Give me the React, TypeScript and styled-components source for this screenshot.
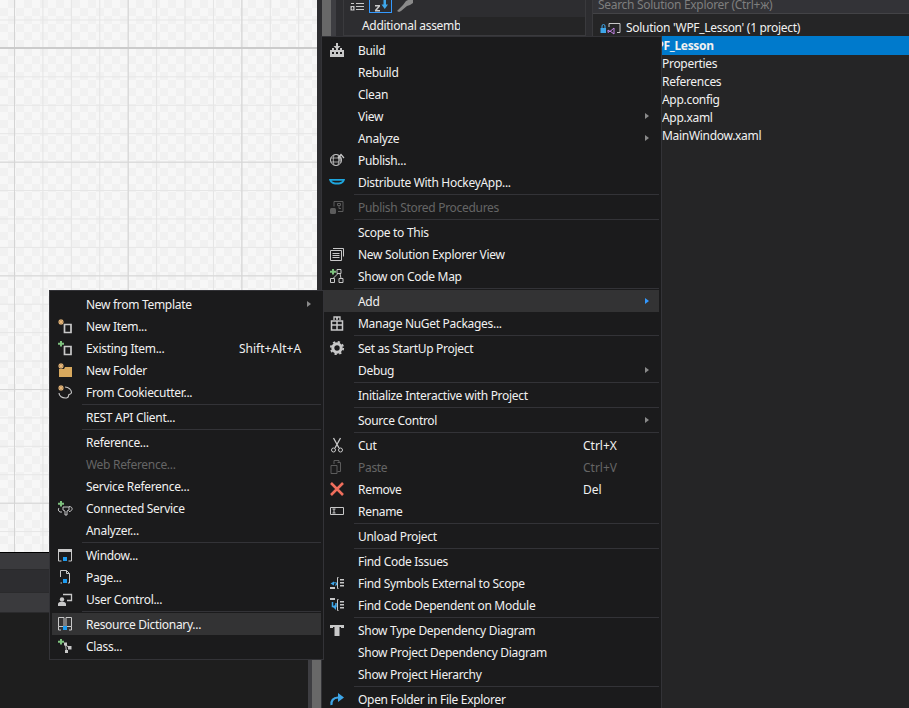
import React from "react";
import styled, { createGlobalStyle } from "styled-components";

const Global = createGlobalStyle`
  html, body { margin: 0; padding: 0; background: #1e1e1e; }
  body { font-family: "Noto Sans", "Liberation Sans", sans-serif; font-size: 12px; letter-spacing: -0.3px; overflow: hidden; }
`;

const Page = styled.div`
  position: relative;
  width: 909px;
  height: 708px;
  overflow: hidden;
  display: grid;
  grid-template-columns: 322px 270px 317px;
  background: #2d2d30;
`;

const LeftColumn = styled.div`
  display: flex;
  flex-direction: column;
  min-width: 0;
`;

const Designer = styled.div`
  height: 552px;
  flex: none;
  margin-right: 5px;
  border-bottom: 1px solid #000;
  background-color: #f7f7f7;
  background-image:
    linear-gradient(#cbcbcb, #cbcbcb),
    linear-gradient(#d6d6d6 0 1px, transparent 1px),
    linear-gradient(90deg, #d4d4d4 0 1px, transparent 1px),
    linear-gradient(#e6e6e6 0 1px, transparent 1px),
    linear-gradient(90deg, #e4e4e4 0 1px, transparent 1px),
    conic-gradient(#f1f1f1 25%, transparent 0 50%, #f1f1f1 0 75%, transparent 0);
  background-size: 100% 2px, 100% 113.7px, 113.7px 100%, 100% 28.43px, 28.43px 100%, 16px 16px;
  background-position: 0 47px, 0 48px, 14px 0, 0 19.500px, 14px 0, 0 0;
  background-repeat: no-repeat, repeat-y, repeat-x, repeat-y, repeat-x, repeat;
`;

const DesignerBar = styled.div<{ $h: number; $bg: string }>`
  height: ${(p) => p.$h}px;
  flex: none;
  background: ${(p) => p.$bg};
  border-bottom: 1px solid #2a2a2c;
`;

const EmptyPane = styled.div`
  flex: 1;
  display: flex;
  justify-content: flex-end;
  background: #1e1e1e;
`;

const ScrollTrack = styled.div`
  width: 14px;
  box-sizing: border-box;
  padding: 0 1px 0 4px;
  background: #3e3e42;
`;

const ScrollThumb = styled.div`
  height: 100%;
  background: #686868;
`;

const MiddlePane = styled.div`
  display: flex;
  padding-left: 21px;
  background: linear-gradient(90deg, #686868 0 9px, #3e3e42 9px 14px, #2d2d30 14px 21px);
`;

const PropsPanel = styled.div`
  width: 243px;
  box-sizing: border-box;
  flex: none;
  border-left: 1px solid #3a3a3d;
  border-right: 1px solid #3a3a3d;
  background: #2d2d30;
`;

const PropsToolbar = styled.div`
  height: 17px;
  display: flex;
  align-items: flex-start;
  gap: 1px;
  padding-left: 1px;
`;

const ToolButton = styled.span<{ $on?: boolean }>`
  width: 23px;
  height: 13px;
  box-sizing: border-box;
  display: flex;
  align-items: flex-end;
  justify-content: center;
  border: ${(p) => (p.$on ? "1px solid #3399ff" : "1px solid transparent")};
  border-top: 0;
`;

const PropRow = styled.div`
  height: 18px;
  display: flex;
  color: #f1f1f1;
  border-bottom: 1px solid #3a3a3d;
`;

const PropName = styled.span`
  width: 116px;
  padding-left: 18px;
  box-sizing: border-box;
  overflow: hidden;
  white-space: nowrap;
  line-height: 18px;
`;

const PropValue = styled.span`
  flex: 1;
  background: #252526;
`;

const Explorer = styled.div`
  background: #252526;
  border-left: 1px solid #3a3a3d;
  color: #f1f1f1;
`;

const SearchBox = styled.div`
  height: 13px;
  line-height: 9px;
  padding-left: 5px;
  color: #7e7e7e;
  background: #333337;
  border-bottom: 1px solid #434346;
`;

const TreeList = styled.div`
  padding-top: 5px;
`;

const TreeRow = styled.div<{ $selected?: boolean }>`
  height: 18px;
  line-height: 20px;
  white-space: nowrap;
  padding-left: ${(p) => (p.$selected ? 52 : 69)}px;
  font-weight: ${(p) => (p.$selected ? 700 : 400)};
  background: ${(p) => (p.$selected ? "#007acc" : "transparent")};
  box-shadow: ${(p) => (p.$selected ? "0 1px 0 #007acc" : "none")};
  color: #f1f1f1;
`;

const SolutionRow = styled.div`
  height: 17px;
  display: flex;
  align-items: center;
  gap: 5px;
  padding-left: 7px;
  line-height: 19px;
  white-space: nowrap;
`;

const Menu = styled.div<{ $x: number; $y: number; $w: number }>`
  position: absolute;
  left: ${(p) => p.$x}px;
  top: ${(p) => p.$y}px;
  width: ${(p) => p.$w}px;
  box-sizing: border-box;
  background: #1b1b1c;
  border: 1px solid #333337;
  padding: 2px;
  color: #f1f1f1;
  white-space: nowrap;
`;

const Row = styled.div<{ $hot?: boolean; $off?: boolean; $sw: number }>`
  height: 22px;
  display: grid;
  grid-template-columns: 26px 1fr ${(p) => p.$sw}px 14px;
  align-items: center;
  background: ${(p) => (p.$hot ? "#333334" : "transparent")};
  color: ${(p) => (p.$off ? "#656565" : "#f1f1f1")};
`;

const IconCell = styled.span`
  display: flex;
  align-items: center;
  justify-content: center;
  height: 22px;
`;

const Label = styled.span`
  padding-left: 8px;
  line-height: 20px;
  margin-top: 2px;
`;

const Shortcut = styled.span`
  line-height: 20px;
  margin-top: 2px;
  letter-spacing: 0;
`;

const Arrow = styled.span<{ $hot?: boolean }>`
  width: 0;
  height: 0;
  border-left: 4px solid ${(p) => (p.$hot ? "#3399ff" : "#8a8a8a")};
  border-top: 3.5px solid transparent;
  border-bottom: 3.5px solid transparent;
`;

const Sep = styled.div`
  height: 1px;
  margin: 1px 0 1px 30px;
  background: #333337;
`;

type IconProps = { children: React.ReactNode };
const I = ({ children }: IconProps) => (
  <svg width="16" height="16" viewBox="0 0 16 16" fill="none">{children}</svg>
);

const G = "#c8c8c8";
const D = "#5c5c5c";
const BLUE = "#3ea6e8";
const ORANGE = "#e8b778";
const GREEN = "#7ec17e";
const BG = "#1b1b1c";

const star = <path d="M4 1v6M1 4h6M2 2l4 4M6 2L2 6" stroke={ORANGE} strokeWidth="1.100" />;
const plus = <path d="M4 1v5.500M1 3.700h6" stroke={GREEN} strokeWidth="2" />;

const icons: Record<string, React.ReactNode> = {
  build: <I><path d="M1 8h2V6h2v2h2V6h2v2h2V6h2v2h2v7H1z" fill={G} /><path d="M7 1h2v3h2.500L8 7.500 4.500 4H7z" fill={G} /><path d="M3 10h2v2H3zM7 10h2v2H7zM11 10h2v2h-2z" fill={BG} /></I>,
  publish: <I><circle cx="7" cy="8" r="5.500" stroke={G} /><path d="M1.500 6h11M1.500 10h11M5 2.800c-1 3.400-1 7 0 10.400M9 2.800c1 3.400 1 7 0 10.400" stroke={G} strokeWidth=".8" /><path d="M11 9V4.500M9 6l3-3.500L15 6" stroke={G} strokeWidth="1.200" /></I>,
  hockey: <svg width="18" height="16" viewBox="0 0 18 16" fill="none"><path d="M1 5h16c-.5 3.500-3 5.500-8 5.500S1.500 8.500 1 5z" fill="#1ea5dc" /><path d="M3.500 6.800h11C13.500 8 12 8.600 9 8.600S4.500 8 3.500 6.800z" fill={BG} /></svg>,
  stored: <I><path d="M5 2.500h9v10H9M5 2.500v5" stroke={D} /><path d="M8.500 4.500h3v2h-3zM10 6.500v3h2" stroke={D} /><rect x="1" y="9" width="6" height="6" rx="1.500" fill={D} /></I>,
  seview: <I><path d="M4 2.500h10.500v8M1.500 4.500h11v10h-11z" stroke={G} /><path d="M3.500 7.500h7M3.500 9.500h7M3.500 11.500h7" stroke={G} /></I>,
  codemap: <I>{plus}<path d="M8 1.500h4v4H8zM1.500 10.500h4v4h-4zM10 10.500h4v4h-4zM9 5.500l-5 5M11 5.500l1 5" stroke={G} /></I>,
  nuget: <I><path d="M2.500 6h11v9h-11zM8 6v9M2.500 10h11" stroke={G} strokeWidth="1.500" /><path d="M5 5V2h2.500L8 5l.5-3H11v3" stroke={G} strokeWidth="1.300" /></I>,
  gear: <I><circle cx="8" cy="8" r="4.200" stroke={G} strokeWidth="3" /><circle cx="8" cy="8" r="6.200" stroke={G} strokeWidth="1.800" strokeDasharray="2.300 2.570" /></I>,
  cut: <I><path d="M4.500 1l5.500 10M11.500 1L6 11" stroke={G} strokeWidth="1.300" /><circle cx="4.500" cy="13" r="2" stroke={G} /><circle cx="11.500" cy="13" r="2" stroke={G} /></I>,
  paste: <I><path d="M5 5V1.500h5V4M2 6.500h6v8H2z" stroke={D} /><path d="M8.500 3.500h3v9h-3" stroke={D} /></I>,
  remove: <I><path d="M2 2l12 12M14 2L2 14" stroke="#ef6e5c" strokeWidth="2.600" /></I>,
  rename: <I><path d="M1.500 4.500h13v7h-13z" stroke={G} /><path d="M3.500 6h3M3.500 10h3M5 6v4" stroke={G} /></I>,
  external: <I><path d="M4 9.500V7.800h3.500V10H6" stroke={BLUE} /><path d="M5 6.500L1.500 8.500 5 10.500z" fill={BLUE} /><path d="M1 12h5v2H1z" fill={G} /><path d="M9.500 2.500h-1v11h1" stroke={G} /><path d="M11 4h4v1.500h-4zM11 7h4v1.500h-4zM11 10h4v1.500h-4z" fill={G} /></I>,
  dependent: <I><path d="M1 1h5v2H1z" fill={G} /><path d="M3.500 5v4.500H7V6" stroke={BLUE} strokeWidth="1.500" /><path d="M7 7v6L4 10z" fill={BLUE} /><path d="M9.500 2.500h-1v11h1" stroke={G} /><path d="M11 4h4v1.500h-4zM11 7h4v1.500h-4zM11 10h4v1.500h-4z" fill={G} /></I>,
  type: <I><path d="M1 3h6v2H4v1H1zM9 3h6v3h-3V5H9zM5.500 3h5v11h-5z" fill={G} /></I>,
  open: <I><path d="M2.500 14c-.5-4 1.500-7.500 6.500-7.500" stroke={BLUE} strokeWidth="2.200" /><path d="M9 2l6 4.500L9 11z" fill={BLUE} /></I>,
  newitem: <I>{star}<path d="M7.500 6.500h6.500v8H7.500z" stroke={G} strokeWidth="1.700" /></I>,
  existing: <I>{plus}<path d="M7.500 6.500h6.500v8H7.500z" stroke={G} strokeWidth="1.700" /></I>,
  newfolder: <I><path d="M2 7h5l1-2h7v10H2z" fill="#d8a95e" />{star}</I>,
  cookie: <I><path d="M8 3c4 0 6.500 3 6.500 5.500 0 1.500-1.500 1.500-2.500 2-1 1 .5 3-2.500 3.500C5 14.500 2 12 2 9" stroke={G} strokeWidth="1.100" />{star}</I>,
  connected: <I>{plus}<path d="M2 8c-1 1-1 3 1 4h2M12 6.500c2.500 0 3.500 1.500 3 3-.3 1-1.500 2-3 2" stroke={G} /><path d="M6 7h6v3l-2 1v4H8v-4L6 10z" stroke={G} /></I>,
  window: <I><path d="M1.500 4h13v10h-3M1.500 4v10h3" stroke={G} /><rect x="1" y="2" width="14" height="3" fill={G} /><rect x="6" y="10" width="4" height="4" fill="#1e9cf0" /></I>,
  page: <I><path d="M3.500 8V1.500h6l3 3V14H11M3.500 14H5" stroke={G} /><path d="M9.500 1.500v3h3" stroke={G} /><rect x="6" y="10" width="4" height="4" fill="#1e9cf0" /></I>,
  usercontrol: <I><path d="M6 3.500h8.500v6H10" stroke={G} strokeWidth="1.300" /><circle cx="5" cy="8.500" r="2.200" fill={G} /><path d="M1 15v-2c0-1 1-2 2-2h4c1 0 2 1 2 2v2z" fill={G} /></I>,
  dictionary: <I><path d="M1.500 1.500h5.500v9h-5.500zM9 1.500h5.500v9H9zM1.500 10.500V14H4M14.500 10.500V14H12" stroke={G} /><rect x="6" y="10" width="4" height="4" fill="#1e9cf0" /></I>,
  classitem: <I>{plus}<rect x="7" y="4.500" width="3" height="3" fill={G} /><rect x="11" y="8" width="3.500" height="3.500" fill={G} /><rect x="8" y="12" width="3" height="3" fill={G} /><path d="M8.500 6l1 8M9 7l3 2.500" stroke={G} /></I>,
};

type Item = { t: string; i?: string; s?: string; sub?: boolean; hot?: boolean; off?: boolean } | "-";

const mainItems: Item[] = [
  { t: "Build", i: "build" }, { t: "Rebuild" }, { t: "Clean" }, { t: "View", sub: true }, { t: "Analyze", sub: true },
  { t: "Publish...", i: "publish" }, { t: "Distribute With HockeyApp...", i: "hockey" }, "-",
  { t: "Publish Stored Procedures", i: "stored", off: true }, "-",
  { t: "Scope to This" }, { t: "New Solution Explorer View", i: "seview" }, { t: "Show on Code Map", i: "codemap" }, "-",
  { t: "Add", sub: true, hot: true }, { t: "Manage NuGet Packages...", i: "nuget" }, "-",
  { t: "Set as StartUp Project", i: "gear" }, { t: "Debug", sub: true }, "-",
  { t: "Initialize Interactive with Project" }, "-",
  { t: "Source Control", sub: true }, "-",
  { t: "Cut", i: "cut", s: "Ctrl+X" }, { t: "Paste", i: "paste", s: "Ctrl+V", off: true }, { t: "Remove", i: "remove", s: "Del" }, { t: "Rename", i: "rename" }, "-",
  { t: "Unload Project" }, "-",
  { t: "Find Code Issues" }, { t: "Find Symbols External to Scope", i: "external" }, { t: "Find Code Dependent on Module", i: "dependent" }, "-",
  { t: "Show Type Dependency Diagram", i: "type" }, { t: "Show Project Dependency Diagram" }, { t: "Show Project Hierarchy" }, "-",
  { t: "Open Folder in File Explorer", i: "open" },
];

const addItems: Item[] = [
  { t: "New from Template", sub: true }, { t: "New Item...", i: "newitem" }, { t: "Existing Item...", i: "existing", s: "Shift+Alt+A" },
  { t: "New Folder", i: "newfolder" }, { t: "From Cookiecutter...", i: "cookie" }, "-",
  { t: "REST API Client..." }, "-",
  { t: "Reference..." }, { t: "Web Reference...", off: true }, { t: "Service Reference..." }, { t: "Connected Service", i: "connected" }, { t: "Analyzer..." }, "-",
  { t: "Window...", i: "window" }, { t: "Page...", i: "page" }, { t: "User Control...", i: "usercontrol" }, "-",
  { t: "Resource Dictionary...", i: "dictionary", hot: true }, { t: "Class...", i: "classitem" },
];

const MenuRows = ({ items, sw }: { items: Item[]; sw: number }) => (
  <>
    {items.map((it, n) =>
      it === "-" ? (
        <Sep key={n} />
      ) : (
        <Row key={n} $hot={it.hot} $off={it.off} $sw={sw}>
          <IconCell>{it.i ? icons[it.i] : null}</IconCell>
          <Label>{it.t}</Label>
          <Shortcut>{it.s}</Shortcut>
          {it.sub ? <Arrow $hot={it.hot} /> : <span />}
        </Row>
      )
    )}
  </>
);

export default function App() {
  return (
    <Page>
      <Global />
      <LeftColumn>
        <Designer />
        <DesignerBar $h={16} $bg="#3a3a3d" />
        <DesignerBar $h={22} $bg="#2d2d30" />
        <DesignerBar $h={19} $bg="#3a3a3d" />
        <EmptyPane>
          <ScrollTrack>
            <ScrollThumb />
          </ScrollTrack>
        </EmptyPane>
      </LeftColumn>
      <MiddlePane>
        <PropsPanel>
          <PropsToolbar>
            <ToolButton>
              <svg width="14" height="10" viewBox="0 0 14 10" fill="none"><path d="M0.500 4h4v4.500h-4z" fill={G} /><path d="M2.500 5v2.500M1.500 6.250h2" stroke="#2d2d30" /><path d="M6 1.500h8M6 4.500h8M6 7.500h8M1 1.500h3" stroke={G} /></svg>
            </ToolButton>
            <ToolButton $on>
              <svg width="16" height="12" viewBox="0 0 16 12" fill="none"><path d="M2 5h5v1.500L4 10h3v1.500H2V10l3-3.500H2z" fill={G} /><path d="M10.500 0h2.500v4.500h2L11.750 9 8.500 4.500h2z" fill={BLUE} /></svg>
            </ToolButton>
            <ToolButton>
              <svg width="18" height="12" viewBox="0 0 18 12" fill="none"><path d="M1 11l6-6 3-4 2-1h5v3l-3 2-3 1-6 5-2 1z" fill="#8a8a8a" /></svg>
            </ToolButton>
          </PropsToolbar>
          <PropRow>
            <PropName>Additional assemb</PropName>
            <PropValue />
          </PropRow>
        </PropsPanel>
      </MiddlePane>
      <Explorer>
        <SearchBox>Search Solution Explorer (Ctrl+ж)</SearchBox>
        <TreeList>
          <SolutionRow>
            <svg width="21" height="14" viewBox="0 0 21 14" fill="none">
              <path d="M2 7V5a1.500 1.500 0 0 1 3 0v2" stroke={BLUE} /><rect x="0.500" y="7" width="5.500" height="5" fill={BLUE} />
              <path d="M9 6V2.500h11v9h-3" stroke={G} /><path d="M8 9l2 1.500L14 7v6l-4-3-2 1.500z" stroke="#c586e8" />
            </svg>
            Solution 'WPF_Lesson' (1 project)
          </SolutionRow>
          <TreeRow $selected>WPF_Lesson</TreeRow>
          <TreeRow>Properties</TreeRow>
          <TreeRow>References</TreeRow>
          <TreeRow>App.config</TreeRow>
          <TreeRow>App.xaml</TreeRow>
          <TreeRow>MainWindow.xaml</TreeRow>
        </TreeList>
      </Explorer>
      <Menu $x={321} $y={36} $w={341}><MenuRows items={mainItems} sw={62} /></Menu>
      <Menu $x={49} $y={290} $w={275}><MenuRows items={addItems} sw={68} /></Menu>
    </Page>
  );
}
